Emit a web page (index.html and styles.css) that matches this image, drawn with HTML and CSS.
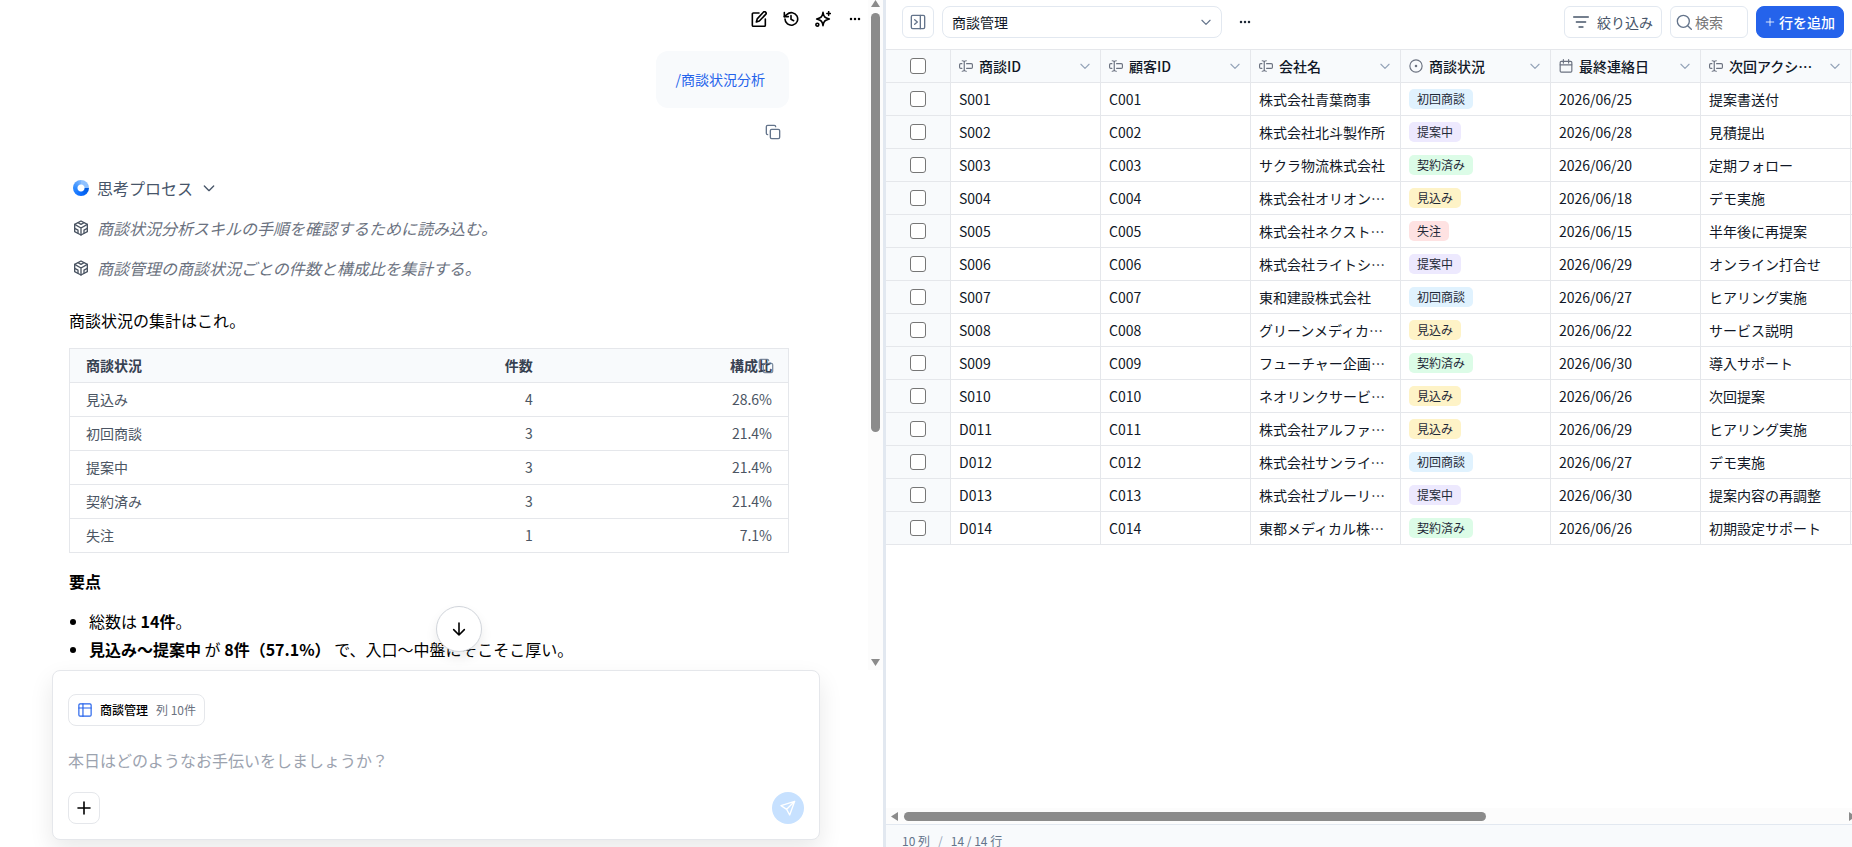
FILE: index.html
```html
<!DOCTYPE html>
<html lang="ja">
<head>
<meta charset="utf-8">
<title>商談管理</title>
<link rel="stylesheet" href="styles.css">
</head>
<body>
<svg class="defs" aria-hidden="true">
  <symbol id="edit" viewBox="0 0 24 24"><path d="M12 3H3.500a1.500 1.500 0 0 0-1.500 1.500v17A1.500 1.500 0 0 0 3.500 23h16.500a1.500 1.500 0 0 0 1.500-1.500V12"/><path d="M18.500 1.800a2.300 2.300 0 0 1 3.500 3.300L12.500 15 8 16.500l1.300-4.700z"/></symbol>
  <symbol id="history" viewBox="0 0 24 24"><path d="M3 12a9.500 9.500 0 1 0 3-7L2 8.500"/><path d="M2 2.500v6h6"/><path d="M12 7v5.500l4 2"/></symbol>
  <symbol id="sparkles" viewBox="0 0 24 24"><path d="M12 2c1 6.500 2.500 8.200 9.500 10-7 1.800-8.500 3.500-9.500 10-1-6.500-2.500-8.200-9.500-10 7-1.800 8.500-3.500 9.500-10z"/><path d="M20.500 1v5.500M17.800 3.800h5.400"/><circle cx="3.500" cy="20.500" r="2.200"/></symbol>
  <symbol id="dots" viewBox="0 0 24 24"><g fill="currentColor" stroke="none"><circle cx="4" cy="12" r="2.500"/><circle cx="12" cy="12" r="2.500"/><circle cx="20" cy="12" r="2.500"/></g></symbol>
  <symbol id="copy" viewBox="0 0 24 24"><rect x="8" y="8" width="14" height="14" rx="2"/><path d="M4 16c-1.100 0-2-.900-2-2V4c0-1.100.900-2 2-2h10c1.100 0 2 .900 2 2"/></symbol>
  <symbol id="chevron" viewBox="0 0 24 24"><path d="m5 9 7 7 7-7"/></symbol>
  <symbol id="cube" viewBox="0 0 24 24"><path d="M12 1.500 21.500 6.500v11L12 22.500 2.500 17.500v-11z"/><path d="M2.500 6.500 12 12l9.500-5.500M12 12v10.500M7.500 4l4.500 2.500 4.500-2.500M2.500 12.500l5 2.800v4.500M21.500 12.500l-5 2.800v4.500"/></symbol>
  <symbol id="table" viewBox="0 0 24 24"><rect x="1.500" y="1.500" width="21" height="21" rx="2"/><path d="M1.500 8.500h21M8.500 1.500v21"/></symbol>
  <symbol id="plus" viewBox="0 0 24 24"><path d="M12 3v18M3 12h18"/></symbol>
  <symbol id="down" viewBox="0 0 24 24"><path d="M12 3v18M4 13l8 8 8-8"/></symbol>
  <symbol id="send" viewBox="0 0 24 24"><path d="M22 2 1.500 8.500l8.500 5.500 4.500 8.500zM22 2 10 14"/></symbol>
  <symbol id="panel" viewBox="0 0 24 24"><rect x="2" y="2" width="20" height="20" rx="2"/><path d="M15.500 2v20M7 8.500l4 3.500-4 3.500"/></symbol>
  <symbol id="text" viewBox="0 0 24 24"><path d="M5.500 3c2 0 3.500.500 3.500 2v14c0 1.500-1.500 2-3.500 2M12.500 3C10.500 3 9 3.500 9 5M9 19c0 1.500 1.500 2 3.500 2"/><path d="M5 8H3a2 2 0 0 0-2 2v4a2 2 0 0 0 2 2h2M13 8h8a2 2 0 0 1 2 2v4a2 2 0 0 1-2 2h-8"/></symbol>
  <symbol id="status" viewBox="0 0 24 24"><circle cx="12" cy="12" r="10.500"/><circle cx="12" cy="12" r="1.200"/></symbol>
  <symbol id="date" viewBox="0 0 24 24"><rect x="2" y="4" width="20" height="18.500" rx="2"/><path d="M7.500 1v6M16.500 1v6M2 10h20"/></symbol>
  <symbol id="filter" viewBox="0 0 24 24"><path d="M1 4.500h22M5 12h14M9 19.500h6"/></symbol>
  <symbol id="search" viewBox="0 0 24 24"><circle cx="11" cy="11" r="9"/><path d="m17.500 17.500 5.500 5.500"/></symbol>
</svg>
<div class="app">
  <main class="chat">
    <div class="chat-scroll">
      <div class="chat-view">
        <nav class="actions" aria-label="チャット操作">
          <button class="icon-btn" aria-label="新規"><svg class="i16 bold"><use href="#edit"/></svg></button>
          <button class="icon-btn" aria-label="履歴"><svg class="i16 bold"><use href="#history"/></svg></button>
          <button class="icon-btn" aria-label="スキル"><svg class="i16 bold"><use href="#sparkles"/></svg></button>
          <button class="icon-btn" aria-label="その他"><svg class="i12"><use href="#dots"/></svg></button>
        </nav>
        <div class="thread">
          <div class="bubble">/商談状況分析</div>
          <button class="icon-btn copy" aria-label="コピー"><svg class="i16"><use href="#copy"/></svg></button>
          <button class="think"><span class="ring"></span>思考プロセス<svg class="i16"><use href="#chevron"/></svg></button>
          <div class="step"><svg class="i16"><use href="#cube"/></svg><em>商談状況分析スキルの手順を確認するために読み込む。</em></div>
          <div class="step"><svg class="i16"><use href="#cube"/></svg><em>商談管理の商談状況ごとの件数と構成比を集計する。</em></div>
          <p class="lead">商談状況の集計はこれ。</p>
          <div class="summary-wrap">
            <table class="summary">
              <thead><tr><th>商談状況</th><th>件数</th><th>構成比</th></tr></thead>
              <tbody>
                <tr><td>見込み</td><td>4</td><td>28.6%</td></tr>
                <tr><td>初回商談</td><td>3</td><td>21.4%</td></tr>
                <tr><td>提案中</td><td>3</td><td>21.4%</td></tr>
                <tr><td>契約済み</td><td>3</td><td>21.4%</td></tr>
                <tr><td>失注</td><td>1</td><td>7.1%</td></tr>
              </tbody>
            </table>
            <button class="icon-btn table-copy" aria-label="表をコピー"><svg class="i16"><use href="#copy"/></svg></button>
          </div>
          <h2 class="points-title">要点</h2>
          <ul class="points">
            <li>総数は <strong>14件</strong>。</li>
            <li><strong>見込み〜提案中</strong> が <strong>8件（57.1%）</strong> で、入口〜中盤にそこそこ厚い。</li>
          </ul>
        </div>
      </div>
      <div class="vbar"><svg class="arrow" viewBox="0 0 9 7"><path d="M4.500 0 9 7H0z"/></svg><div class="vtrack"><div class="vthumb"></div></div><svg class="arrow" viewBox="0 0 9 7"><path d="M0 0h9L4.500 7z"/></svg></div>
      <button class="to-end" aria-label="最新へ移動"><svg class="i16 bold"><use href="#down"/></svg></button>
    </div>
    <form class="composer">
      <div class="chip"><svg class="i14"><use href="#table"/></svg><b>商談管理</b><span>列 10件</span></div>
      <textarea class="prompt" rows="1" aria-label="メッセージ" placeholder="本日はどのようなお手伝いをしましょうか？"></textarea>
      <div class="composer-row">
        <button type="button" class="add" aria-label="追加"><svg class="i16 bold"><use href="#plus"/></svg></button>
        <button type="button" class="send" aria-label="送信"><svg class="i16"><use href="#send"/></svg></button>
      </div>
    </form>
  </main>
  <section class="sheet">
    <header class="toolbar">
      <button class="tool square" aria-label="パネルを閉じる"><svg class="i16"><use href="#panel"/></svg></button>
      <div class="picker"><select aria-label="テーブル"><option>商談管理</option></select><svg class="i14"><use href="#chevron"/></svg></div>
      <button class="icon-btn more" aria-label="テーブル操作"><svg class="i12"><use href="#dots"/></svg></button>
      <button class="tool filter"><svg class="i16"><use href="#filter"/></svg>絞り込み</button>
      <label class="tool search"><svg class="i16"><use href="#search"/></svg><input type="text" aria-label="検索" placeholder="検索"></label>
      <button class="tool primary"><svg class="i10"><use href="#plus"/></svg>行を追加</button>
    </header>
    <div class="grid-view">
      <table class="grid">
        <colgroup><col class="c-check"><col class="c"><col class="c"><col class="c"><col class="c"><col class="c"><col class="c"><col class="c"></colgroup>
        <thead><tr id="head"></tr></thead>
        <tbody id="rows"></tbody>
      </table>
    </div>
    <div class="hbar"><svg class="harrow" viewBox="0 0 7 9"><path d="M7 0v9L0 4.500z"/></svg><div class="htrack"><div class="hthumb"></div></div><svg class="harrow" viewBox="0 0 7 9"><path d="M0 0v9l7-4.500z"/></svg></div>
    <footer class="status"><span>10 列</span><span class="sep">/</span><span>14 / 14 行</span></footer>
  </section>
</div>
<script src="app.js"></script>
</body>
</html>
```
FILE: styles.css
```css
* { box-sizing: border-box; }
body { margin: 0; font: 16px/28px "Noto Sans CJK JP", sans-serif; color: #000; background: #fff; }
button, input, select, textarea { font: inherit; color: inherit; margin: 0; }
svg { fill: none; stroke: currentColor; stroke-width: 2; stroke-linecap: round; stroke-linejoin: round; flex: none; display: block; }
.defs { position: absolute; width: 0; height: 0; }
.i16 { width: 16px; height: 16px; }
.i14 { width: 14px; height: 14px; }
.i12 { width: 12px; height: 12px; }
.i10 { width: 10px; height: 10px; }
.bold { stroke-width: 2.4; }
.app { display: flex; height: 100vh; overflow: hidden; }

.chat { flex: 883 1 0; min-width: 0; display: flex; flex-direction: column; border-right: 3px solid #e2e8f0; }
.chat-scroll { flex: 1; min-height: 0; display: flex; position: relative; }
.chat-view { flex: 1; min-width: 0; overflow: hidden; }
.icon-btn { border: 0; background: none; padding: 0; display: flex; align-items: center; justify-content: center; }
.actions { display: flex; justify-content: flex-end; align-items: center; gap: 16px; padding: 11px 7px 0 0; }
.actions .icon-btn:last-child { padding-left: 2px; }
.thread { max-width: 720px; margin: 24px 79px 0 69px; display: flex; flex-direction: column; align-items: flex-start; }
.bubble { align-self: flex-end; background: #f8fafc; color: #2563eb; border-radius: 12px; padding: 18px 24px 18px 20px; font-size: 14px; line-height: 21px; }
.copy { align-self: flex-end; margin: 16px 8px 0 0; color: #64748b; }
.think { display: flex; align-items: center; gap: 8px; border: 0; background: none; color: #475569; padding: 0; margin: 34px 0 0 4px; line-height: 28px; }
.ring { width: 16px; height: 16px; border-radius: 50%; background: radial-gradient(circle, #fff 3px, transparent 4px), conic-gradient(#8fc1ff 0 90deg, #0059dd 90deg, #0a6cff 180deg, #2f8bff 270deg, #7ab5ff 360deg); }
.step { display: flex; align-items: center; gap: 8px; margin: 12px 0 0 4px; color: #4b5563; }
.step em { color: #6b7280; }
.lead { margin: 24px 0 14px; }
.summary-wrap { position: relative; width: 100%; }
.summary { width: 100%; table-layout: fixed; border-collapse: collapse; border: 1px solid #e5e7eb; font-size: 14px; line-height: 21px; color: #4b5563; }
.summary th, .summary td { padding: 6px 16px; text-align: right; border-bottom: 1px solid #e5e7eb; }
.summary th:first-child, .summary td:first-child { text-align: left; }
.summary th { background: #f8fafc; color: #374151; font-weight: 700; }
.table-copy { position: absolute; top: 10px; right: 15px; color: #64748b; opacity: .8; }
.points-title { font-size: 16px; line-height: 28px; margin: 14px 0 12px; }
.points { margin: 0; padding-left: 20px; white-space: nowrap; }
.vbar { width: 15px; background: #fcfcfc; display: flex; flex-direction: column; align-items: center; padding-bottom: 4px; }
.arrow { width: 9px; height: 7px; fill: #8b8b8b; stroke: none; }
.vtrack { flex: 1; padding: 6px 0; }
.vthumb { width: 9px; height: 65.5%; border-radius: 5px; background: #8b8b8b; }
.to-end { position: absolute; bottom: 18px; left: 52%; transform: translateX(-50%); width: 46px; height: 46px; border-radius: 50%; border: 1px solid #d1d5db; background: #fff; box-shadow: 0 6px 12px rgba(0,0,0,.08); display: flex; align-items: center; justify-content: center; padding: 0; }

.composer { position: relative; margin: 0 63px 7px 52px; border: 1px solid #e5e7eb; border-radius: 8px; background: #fff; padding: 23px 15px 15px; box-shadow: 0 10px 24px rgba(0,0,0,.09); display: flex; flex-direction: column; }
.chip { align-self: flex-start; display: flex; align-items: center; gap: 8px; height: 32px; padding: 0 8px 0 9px; border: 1px solid #e5e7eb; border-radius: 8px; font-size: 12px; line-height: 18px; }
.chip svg { color: #2563eb; }
.chip b { font-weight: 500; }
.chip span { color: #6b7280; }
.prompt { display: block; width: 100%; height: 28px; border: 0; padding: 0; resize: none; background: none; outline: 0; margin: 20px 0 18px; overflow: hidden; }
.prompt::placeholder { color: #9ca3af; opacity: 1; }
.composer-row { display: flex; justify-content: space-between; }
.add, .send { width: 32px; height: 32px; display: flex; align-items: center; justify-content: center; padding: 0; background: #fff; border: 1px solid #e5e7eb; border-radius: 8px; }
.send { border: 0; border-radius: 50%; background: #c7e1ff; color: #fff; }

.sheet { flex: 966 1 0; min-width: 0; display: flex; flex-direction: column; font-size: 14px; line-height: 20px; color: #1f2937; overflow: hidden; }
.toolbar { display: flex; align-items: center; gap: 8px; padding: 6px 8px 11px 16px; border-bottom: 1px solid #e5e7eb; height: 50px; }
.tool { height: 32px; display: flex; align-items: center; border: 1px solid #e2e8f0; border-radius: 6px; background: #fff; color: #475569; padding: 0 8px; gap: 8px; white-space: nowrap; }
.square { width: 32px; padding: 0; justify-content: center; color: #64748b; }
.picker { position: relative; width: 280px; height: 32px; }
.picker select { appearance: none; width: 100%; height: 100%; border: 1px solid #e2e8f0; border-radius: 8px; background: #fff; padding: 0 32px 0 9px; color: #111827; }
.picker svg { position: absolute; right: 9px; top: 9px; color: #64748b; }
.more { margin: 0 auto 0 9px; color: #1f2937; }
.search { width: 78px; padding: 0 5px; gap: 3px; color: #64748b; }
.search input { border: 0; outline: 0; padding: 0; min-width: 0; width: 100%; background: none; }
.search input::placeholder { color: #757575; }
.primary { background: #2563eb; border-color: #2563eb; color: #fff; border-radius: 8px; gap: 4px; font-weight: 500; }
.grid-view { flex: 1; min-height: 0; overflow: hidden; }
.grid { table-layout: fixed; border-collapse: separate; border-spacing: 0; width: 1115px; }
.c-check { width: 65px; }
.c { width: 150px; }
.grid th, .grid td { height: 33px; padding: 0 8px; border-right: 1px solid #e5e7eb; border-bottom: 1px solid #e5e7eb; text-align: left; font-weight: 400; color: #111827; white-space: nowrap; overflow: hidden; text-overflow: ellipsis; }
.grid th, .grid td:first-child { background: #f8fafc; }
.grid th:first-child, .grid td:first-child { padding: 0; }
.grid input { display: block; width: 16px; height: 16px; margin: 0 auto; appearance: none; background: #fff; border: 1px solid #767676; border-radius: 3px; }
.th { display: flex; align-items: center; gap: 6px; font-weight: 500; }
.th svg { color: #6b7280; }
.th span { flex: 1; min-width: 0; overflow: hidden; text-overflow: ellipsis; }
.th svg:last-child { color: #94a3b8; margin-left: 4px; }
.tag { display: block; width: max-content; height: 20px; padding: 0 8px; border-radius: 5px; font-size: 12px; line-height: 20px; color: #1f2937; }
.first { background: #e0f2fe; }
.offer { background: #ede9fe; }
.done { background: #dcfce7; }
.maybe { background: #fef3c7; }
.lost { background: #fee2e2; }
.hbar { height: 16px; background: #fcfcfc; display: flex; align-items: center; padding-left: 5px; margin-right: -4px; }
.harrow { width: 7px; height: 9px; fill: #8b8b8b; stroke: none; }
.htrack { flex: 1; padding: 0 6px; }
.hthumb { height: 9px; width: 62%; border-radius: 5px; background: #8b8b8b; }
.status { height: 23px; border-top: 1px solid #e2e8f0; background: #f8fafc; color: #64748b; font-size: 12px; line-height: 18px; padding: 7px 16px 0; display: flex; gap: 8px; overflow: hidden; }
.sep { color: #94a3b8; }
```
FILE: app.js
```js
const columns = [['text', '商談ID'], ['text', '顧客ID'], ['text', '会社名'], ['status', '商談状況'], ['date', '最終連絡日'], ['text', '次回アクション'], ['text', '']];
const tagClass = { '初回商談': 'first', '提案中': 'offer', '契約済み': 'done', '見込み': 'maybe', '失注': 'lost' };
const rows = [
  ['S001', 'C001', '株式会社青葉商事', '初回商談', '2026/06/25', '提案書送付'],
  ['S002', 'C002', '株式会社北斗製作所', '提案中', '2026/06/28', '見積提出'],
  ['S003', 'C003', 'サクラ物流株式会社', '契約済み', '2026/06/20', '定期フォロー'],
  ['S004', 'C004', '株式会社オリオン商会', '見込み', '2026/06/18', 'デモ実施'],
  ['S005', 'C005', '株式会社ネクストワン', '失注', '2026/06/15', '半年後に再提案'],
  ['S006', 'C006', '株式会社ライトシステム', '提案中', '2026/06/29', 'オンライン打合せ'],
  ['S007', 'C007', '東和建設株式会社', '初回商談', '2026/06/27', 'ヒアリング実施'],
  ['S008', 'C008', 'グリーンメディカル㈱', '見込み', '2026/06/22', 'サービス説明'],
  ['S009', 'C009', 'フューチャー企画開発', '契約済み', '2026/06/30', '導入サポート'],
  ['S010', 'C010', 'ネオリンクサービス㈱', '見込み', '2026/06/26', '次回提案'],
  ['D011', 'C011', '株式会社アルファテック', '見込み', '2026/06/29', 'ヒアリング実施'],
  ['D012', 'C012', '株式会社サンライズ電機', '初回商談', '2026/06/27', 'デモ実施'],
  ['D013', 'C013', '株式会社ブルーリーフ', '提案中', '2026/06/30', '提案内容の再調整'],
  ['D014', 'C014', '東都メディカル株式会社', '契約済み', '2026/06/26', '初期設定サポート']
];
document.getElementById('head').innerHTML = '<th><input type="checkbox" aria-label="すべて選択"></th>' +
  columns.map(([icon, name]) => `<th><div class="th"><svg class="i14"><use href="#${icon}"/></svg><span>${name}</span><svg class="i14"><use href="#chevron"/></svg></div></th>`).join('');
document.getElementById('rows').innerHTML = rows.map(r =>
  `<tr><td><input type="checkbox" aria-label="${r[0]}を選択"></td>` +
  r.map((v, i) => i === 3 ? `<td><span class="tag ${tagClass[v]}">${v}</span></td>` : `<td>${v}</td>`).join('') + '<td></td></tr>').join('');
```
